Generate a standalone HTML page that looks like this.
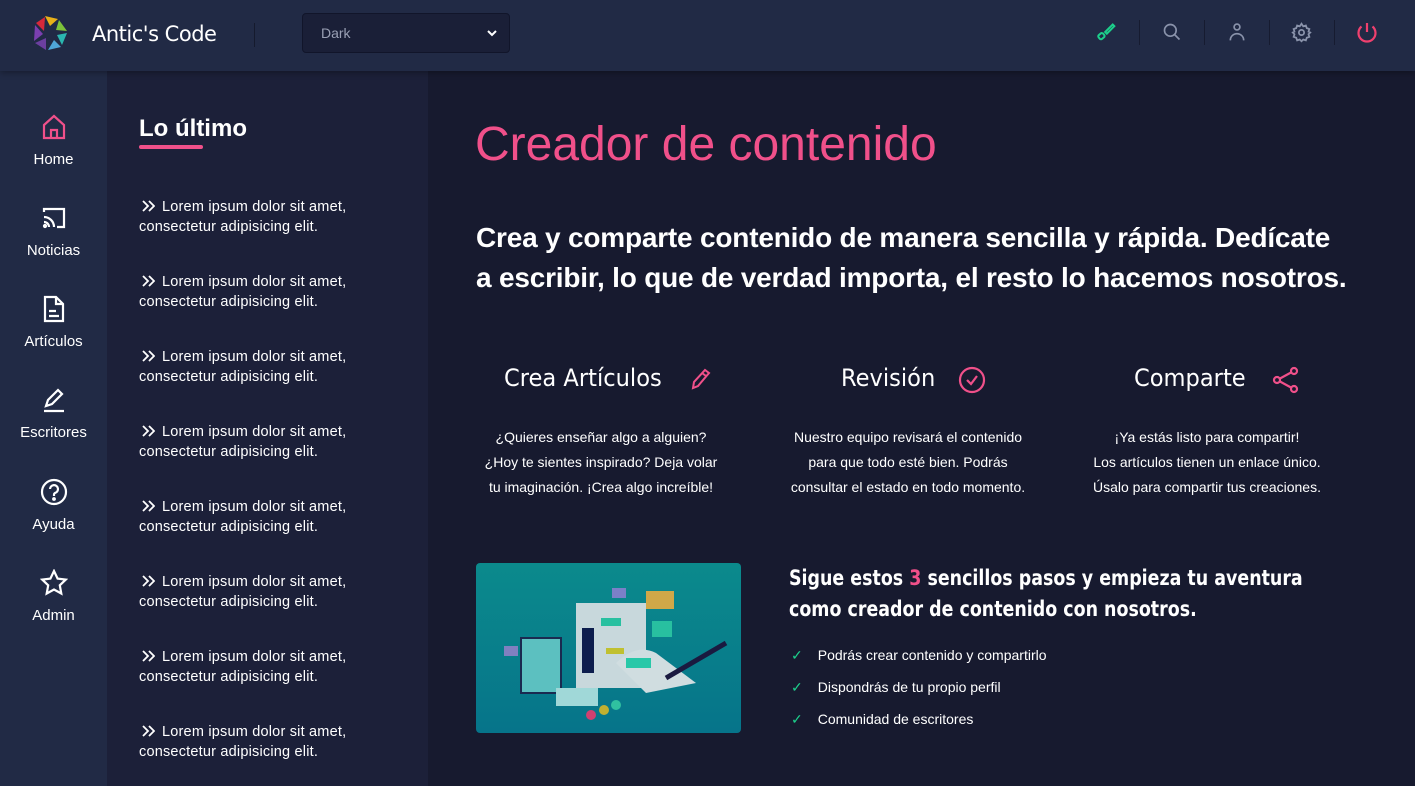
<!DOCTYPE html>
<html><head><meta charset="utf-8"><style>
*{box-sizing:border-box;margin:0;padding:0}
body{width:1415px;height:786px;overflow:hidden;background:#171a2f;font-family:"Liberation Sans",sans-serif;color:#fff;position:relative}
.hdr{position:absolute;left:0;top:0;width:1415px;height:71px;background:#212a45;box-shadow:0 2px 6px rgba(0,0,0,.3);z-index:2}
.nav{position:absolute;left:0;top:71px;width:107px;height:715px;background:#212a45}
.side{position:absolute;left:107px;top:71px;width:321px;height:715px;background:#1c2039}
.ni{position:absolute;left:0;width:107px;text-align:center;font-size:15px}
.ni svg{display:block;margin:0 auto 10px}
.li{position:absolute;left:139px;font-size:14.5px;line-height:20px;letter-spacing:.2px}
.li svg{vertical-align:-1px;margin-right:7px;margin-left:3px}
.pk{color:#f0508a}
.icn{position:absolute;top:22px}
.sep{position:absolute;top:20px;width:1px;height:25px;background:#161b30}
.h3{position:absolute;top:364px;font-size:24px;font-family:'DejaVu Sans',sans-serif;transform:scaleX(.94);transform-origin:left}
</style></head><body>
<div class="hdr">
<svg style="position:absolute;left:32px;top:14px" width="38" height="38" viewBox="0 0 38 38">
<polygon points="13,2 26,5 18,12" fill="#e8b019"/><polygon points="27,6 35,17 24,16" fill="#7cc23a"/>
<polygon points="35,19 30,31 25,21" fill="#2bb7b0"/><polygon points="29,33 16,36 22,26" fill="#4fa6d9"/>
<polygon points="14,36 3,29 14,24" fill="#6b3fa0"/><polygon points="2,27 3,11 11,20" fill="#7a3fb0"/>
<polygon points="4,9 13,3 12,17" fill="#d6283a"/></svg>
<div style="position:absolute;left:92px;top:22px;font-size:21px;font-family:'DejaVu Sans',sans-serif;letter-spacing:-.5px">Antic's Code</div>
<div style="position:absolute;left:254px;top:23px;width:1px;height:24px;background:#151a2d"></div>
<div style="position:absolute;left:302px;top:13px;width:208px;height:40px;background:#1a1f37;border:1px solid #11152a;border-radius:4px;font-size:14px;color:#9aa0b4;padding:11px 18px">Dark
<svg style="position:absolute;right:12px;top:15px" width="10" height="8" viewBox="0 0 10 8"><path d="M1 2l4 4 4-4" stroke="#fff" stroke-width="2" fill="none"/></svg></div>
<svg class="icn" style="left:1096px" width="20" height="20" viewBox="0 0 24 24" fill="none" stroke="#1ccf8b" stroke-width="2.4"><path d="M20 3l2 2-9 9-2-2z"/><rect x="3" y="14" width="7" height="6" rx="2" transform="rotate(-40 6.5 17)"/></svg>
<div class="sep" style="left:1139px"></div>
<svg class="icn" style="left:1162px" width="20" height="20" viewBox="0 0 24 24" fill="none" stroke="#8a93ab" stroke-width="2"><circle cx="10" cy="10" r="7"/><path d="M15 15l6 6"/></svg>
<div class="sep" style="left:1204px"></div>
<svg class="icn" style="left:1227px" width="20" height="20" viewBox="0 0 24 24" fill="none" stroke="#8a93ab" stroke-width="2"><circle cx="12" cy="6" r="3.5"/><path d="M4 22c0-5 4-8 8-8s8 3 8 8"/></svg>
<div class="sep" style="left:1269px"></div>
<svg class="icn" style="left:1291px" width="21" height="21" viewBox="0 0 24 24" fill="none" stroke="#8a93ab" stroke-width="2"><circle cx="12" cy="12" r="3"/><path d="M12 2l2 3 3-1 1 3 3 1-1 3 2 1-2 2 1 3-3 1-1 3-3-1-2 2-2-2-3 1-1-3-3-1 1-3-2-2 2-1-1-3 3-1 1-3 3 1z"/></svg>
<div class="sep" style="left:1334px"></div>
<svg class="icn" style="left:1355px;top:21px" width="24" height="24" viewBox="0 0 24 24" fill="none" stroke="#f0406e" stroke-width="2.2"><path d="M12 2v9"/><path d="M6.5 5.5a8.5 8.5 0 1 0 11 0"/></svg>
</div>
<div class="nav">
<div class="ni" style="top:42px"><svg width="26" height="28" viewBox="0 0 26 28" fill="none" stroke="#f0508a" stroke-width="2.2"><path d="M3 12L13 3l10 9v13H3z"/><path d="M10 25v-8h6v8"/></svg>Home</div>
<div class="ni" style="top:133px"><svg width="26" height="28" viewBox="0 0 26 28" fill="none" stroke="#fff" stroke-width="2.2"><path d="M3 8V5h20v18h-7"/><path d="M3 13a10 10 0 0 1 10 10M3 18a5 5 0 0 1 5 5"/><circle cx="4" cy="22" r="1" fill="#fff"/></svg>Noticias</div>
<div class="ni" style="top:224px"><svg width="26" height="28" viewBox="0 0 26 28" fill="none" stroke="#fff" stroke-width="2.2"><path d="M4 2h11l7 7v17H4z"/><path d="M15 2v7h7M8 16h7M8 21h10"/></svg>Artículos</div>
<div class="ni" style="top:315px"><svg width="26" height="28" viewBox="0 0 26 28" fill="none" stroke="#fff" stroke-width="2.2"><path d="M5 20l2-6L17 4l4 4-10 10z"/><path d="M3 25h20"/></svg>Escritores</div>
<div class="ni" style="top:407px"><svg width="28" height="28" viewBox="0 0 28 28" fill="none" stroke="#fff" stroke-width="2.2"><circle cx="14" cy="14" r="12"/><path d="M10 11a4 4 0 1 1 5 4c-1 .5-1 1-1 3"/><circle cx="14" cy="21" r=".8" fill="#fff"/></svg>Ayuda</div>
<div class="ni" style="top:498px"><svg width="28" height="28" viewBox="0 0 28 28" fill="none" stroke="#fff" stroke-width="2.2"><path d="M14 2l3.6 7.6 8.2 1-6 5.7 1.5 8.2L14 20.5l-7.3 4 1.5-8.2-6-5.7 8.2-1z"/></svg>Admin</div>
</div>
<div class="side">
<div style="position:absolute;left:32px;top:44px;font-size:24px;font-weight:bold">Lo último</div>
<div style="position:absolute;left:32px;top:74px;width:64px;height:4px;border-radius:2px;background:#f0508a"></div>
</div>
<div class="li" style="top:197px"><svg width="13" height="12" viewBox="0 0 13 12" fill="none" stroke="#fff" stroke-width="1.8"><path d="M1 1l5 5-5 5M7 1l5 5-5 5"/></svg>Lorem ipsum dolor sit amet,<br>consectetur adipisicing elit.</div>
<div class="li" style="top:272px"><svg width="13" height="12" viewBox="0 0 13 12" fill="none" stroke="#fff" stroke-width="1.8"><path d="M1 1l5 5-5 5M7 1l5 5-5 5"/></svg>Lorem ipsum dolor sit amet,<br>consectetur adipisicing elit.</div>
<div class="li" style="top:347px"><svg width="13" height="12" viewBox="0 0 13 12" fill="none" stroke="#fff" stroke-width="1.8"><path d="M1 1l5 5-5 5M7 1l5 5-5 5"/></svg>Lorem ipsum dolor sit amet,<br>consectetur adipisicing elit.</div>
<div class="li" style="top:422px"><svg width="13" height="12" viewBox="0 0 13 12" fill="none" stroke="#fff" stroke-width="1.8"><path d="M1 1l5 5-5 5M7 1l5 5-5 5"/></svg>Lorem ipsum dolor sit amet,<br>consectetur adipisicing elit.</div>
<div class="li" style="top:497px"><svg width="13" height="12" viewBox="0 0 13 12" fill="none" stroke="#fff" stroke-width="1.8"><path d="M1 1l5 5-5 5M7 1l5 5-5 5"/></svg>Lorem ipsum dolor sit amet,<br>consectetur adipisicing elit.</div>
<div class="li" style="top:572px"><svg width="13" height="12" viewBox="0 0 13 12" fill="none" stroke="#fff" stroke-width="1.8"><path d="M1 1l5 5-5 5M7 1l5 5-5 5"/></svg>Lorem ipsum dolor sit amet,<br>consectetur adipisicing elit.</div>
<div class="li" style="top:647px"><svg width="13" height="12" viewBox="0 0 13 12" fill="none" stroke="#fff" stroke-width="1.8"><path d="M1 1l5 5-5 5M7 1l5 5-5 5"/></svg>Lorem ipsum dolor sit amet,<br>consectetur adipisicing elit.</div>
<div class="li" style="top:722px"><svg width="13" height="12" viewBox="0 0 13 12" fill="none" stroke="#fff" stroke-width="1.8"><path d="M1 1l5 5-5 5M7 1l5 5-5 5"/></svg>Lorem ipsum dolor sit amet,<br>consectetur adipisicing elit.</div>

<div style="position:absolute;left:475px;top:117px;font-size:48px;color:#f0508a;font-family:'Liberation Sans',sans-serif;letter-spacing:0">Creador de contenido</div>
<div style="position:absolute;left:476px;top:218px;width:950px;font-size:28px;line-height:40px;font-family:'Liberation Sans',sans-serif;font-weight:bold;letter-spacing:-.2px">Crea y comparte contenido de manera sencilla y rápida. Dedícate<br>a escribir, lo que de verdad importa, el resto lo hacemos nosotros.</div>

<div class="h3" style="left:504px">Crea Artículos</div>
<svg style="position:absolute;left:690px;top:367px" width="22" height="24" viewBox="0 0 22 24" fill="none" stroke="#f0508a" stroke-width="2"><path d="M3 21l1-6L15 3l4 3L8 19z"/><path d="M12 6l4 3"/></svg>
<div class="h3" style="left:841px">Revisión</div>
<svg style="position:absolute;left:958px;top:366px" width="28" height="28" viewBox="0 0 28 28" fill="none" stroke="#f0508a" stroke-width="2.2"><circle cx="14" cy="14" r="12"/><path d="M9 14l4 4 6-8"/></svg>
<div class="h3" style="left:1134px">Comparte</div>
<svg style="position:absolute;left:1272px;top:366px" width="28" height="28" viewBox="0 0 28 28" fill="none" stroke="#f0508a" stroke-width="2.2"><circle cx="22" cy="5" r="3"/><circle cx="5" cy="14" r="3"/><circle cx="22" cy="23" r="3"/><path d="M8 12.5l11-6M8 15.5l11 6"/></svg>

<div style="position:absolute;left:476px;top:425px;width:250px;text-align:center;font-size:14px;line-height:25px">¿Quieres enseñar algo a alguien?<br>¿Hoy te sientes inspirado? Deja volar<br>tu imaginación. ¡Crea algo increíble!</div>
<div style="position:absolute;left:783px;top:425px;width:250px;text-align:center;font-size:14px;line-height:25px">Nuestro equipo revisará el contenido<br>para que todo esté bien. Podrás<br>consultar el estado en todo momento.</div>
<div style="position:absolute;left:1072px;top:425px;width:270px;text-align:center;font-size:14px;line-height:25px">¡Ya estás listo para compartir!<br>Los artículos tienen un enlace único.<br>Úsalo para compartir tus creaciones.</div>

<div style="position:absolute;left:476px;top:563px;width:265px;height:170px;border-radius:4px;background:linear-gradient(180deg,#0b8a8c,#06748a);overflow:hidden">
<svg width="265" height="170" viewBox="0 0 265 170">
<rect x="45" y="75" width="40" height="55" fill="#5cc0c0" stroke="#1a2a50" stroke-width="2"/>
<rect x="100" y="40" width="70" height="85" fill="#c8d8dc"/><rect x="106" y="65" width="12" height="45" fill="#0d1d4d"/>
<rect x="125" y="55" width="20" height="8" fill="#28c0a0"/><rect x="130" y="85" width="18" height="6" fill="#c0c030"/>
<path d="M140 100q20-20 40-10l40 30-50 10z" fill="#d0dde0"/><rect x="150" y="95" width="25" height="10" fill="#28c8a8"/>
<rect x="170" y="28" width="28" height="18" fill="#d0a848"/><rect x="176" y="58" width="20" height="16" fill="#28c0a0"/>
<path d="M190 115l60-35" stroke="#1a1a40" stroke-width="5"/><rect x="80" y="125" width="42" height="18" fill="#a0d8d8"/>
<circle cx="115" cy="152" r="5" fill="#d04070"/><circle cx="128" cy="147" r="5" fill="#c0b030"/><circle cx="140" cy="142" r="5" fill="#30c0a0"/>
<rect x="28" y="83" width="14" height="10" fill="#8080c0"/><rect x="136" y="25" width="14" height="10" fill="#7a80c8"/>
</svg></div>
<div style="position:absolute;left:789px;top:563px;font-size:21px;line-height:31px;font-family:'DejaVu Sans',sans-serif;font-weight:bold;transform:scaleX(.83);transform-origin:left;width:700px">Sigue estos <span class="pk">3</span> sencillos pasos y empieza tu aventura<br>como creador de contenido con nosotros.</div>
<div style="position:absolute;left:791px;top:639px;font-size:14px;line-height:32px">
<div><span style="color:#1ccf8b;margin-right:15px">✓</span>Podrás crear contenido y compartirlo</div>
<div><span style="color:#1ccf8b;margin-right:15px">✓</span>Dispondrás de tu propio perfil</div>
<div><span style="color:#1ccf8b;margin-right:15px">✓</span>Comunidad de escritores</div>
</div>
</body></html>
